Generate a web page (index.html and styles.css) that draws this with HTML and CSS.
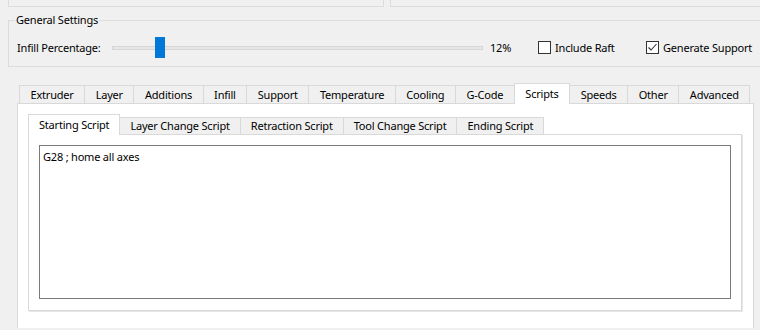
FILE: index.html
```html
<!DOCTYPE html>
<html lang="en">
<head>
  <meta charset="UTF-8" />
  <title>Slicer Settings</title>
  <link rel="stylesheet" href="styles.css">
</head>
<body>

  <div class="top-groups">
    <div class="top-box top-left"></div>
    <div class="top-box top-right"></div>
  </div>

  <fieldset class="group">
    <legend>General Settings</legend>
    <div class="settings-row">
      <span class="field-label">Infill Percentage:</span>
      <div class="slider">
        <div class="track"></div>
        <div class="thumb" style="left: 43px"></div>
      </div>
      <span class="value">12%</span>
      <label class="check-item raft">
        <span class="box"></span>Include Raft
      </label>
      <label class="check-item">
        <span class="box">
          <svg width="11" height="11" viewBox="0 0 11 11">
            <polyline points="1.5,5.5 4,8 9.5,2" fill="none" stroke="#333" stroke-width="1.1"/>
          </svg>
        </span>Generate Support
      </label>
    </div>
  </fieldset>

  <div class="tab-control outer">
    <div class="tab-strip">
      <div class="tab">Extruder</div>
      <div class="tab">Layer</div>
      <div class="tab">Additions</div>
      <div class="tab">Infill</div>
      <div class="tab">Support</div>
      <div class="tab">Temperature</div>
      <div class="tab">Cooling</div>
      <div class="tab">G-Code</div>
      <div class="tab active">Scripts</div>
      <div class="tab">Speeds</div>
      <div class="tab">Other</div>
      <div class="tab">Advanced</div>
    </div>
    <div class="tab-page">
      <div class="tab-control inner">
        <div class="tab-strip">
          <div class="tab active">Starting Script</div>
          <div class="tab">Layer Change Script</div>
          <div class="tab">Retraction Script</div>
          <div class="tab">Tool Change Script</div>
          <div class="tab">Ending Script</div>
        </div>
        <div class="tab-page">
          <textarea class="script" spellcheck="false">G28 ; home all axes</textarea>
        </div>
      </div>
    </div>
  </div>

</body>
</html>
```

FILE: styles.css
```css
body {
  margin: 0;
  background: #f0f0f0;
  font-family: "Noto Sans", "Open Sans", sans-serif;
  font-size: 11px;
  letter-spacing: -0.2px;
  color: #000;
}

/* remains of the group boxes above */
.top-groups {
  display: flex;
  height: 7px;
}

.top-box {
  box-sizing: border-box;
  height: 7px;
  border: 1px solid #dcdcdc;
  border-top: none;
}

.top-left {
  width: 376px;
  margin-left: 8px;
}

.top-right {
  flex: 1;
  margin-left: 6px;
  border-right: none;
}

/* General Settings */
.group {
  margin: 5px 0 0 8px;
  padding: 0 0 0 6px;
  border: 1px solid #dcdcdc;
  border-right: none;
  min-width: 0;
}

.group legend {
  padding: 0 1px;
  line-height: 16px;
}

.settings-row {
  display: flex;
  align-items: center;
  height: 21px;
  padding: 9px 0 8px;
  white-space: nowrap;
}

.field-label {
  width: 95px;
  padding-left: 2px;
}

.slider {
  position: relative;
  display: flex;
  align-items: center;
  width: 371px;
  height: 21px;
}

.track {
  box-sizing: border-box;
  width: 100%;
  height: 4px;
  border: 1px solid #d6d6d6;
  background: #e7e7e7;
}

.thumb {
  position: absolute;
  top: 0;
  width: 10px;
  height: 21px;
  background: #0078d7;
}

.value {
  width: 48px;
  margin-left: 7px;
}

.check-item {
  display: flex;
  align-items: center;
}

.raft {
  width: 108px;
}

.box {
  box-sizing: border-box;
  display: flex;
  align-items: center;
  justify-content: center;
  width: 13px;
  height: 13px;
  margin-right: 4px;
  border: 1px solid #333;
  background: #fff;
}

/* tab controls */
.outer {
  margin: 16px 6px 0 17px;
}

.tab-strip {
  display: flex;
  align-items: flex-end;
  height: 20px;
}

.outer > .tab-strip {
  padding-left: 2px;
}

.tab {
  box-sizing: border-box;
  height: 18px;
  padding: 0 10.5px;
  line-height: 17px;
  border: 1px solid #d9d9d9;
  border-bottom: none;
  background: #f0f0f0;
  white-space: nowrap;
}

.tab + .tab {
  margin-left: -1px;
}

.tab.active {
  position: relative;
  z-index: 1;
  height: 21px;
  margin-bottom: -1px;
  padding-top: 1px;
  background: #fff;
}

.tab-page {
  border: 1px solid #d9d9d9;
  background: #fff;
}

/* the outer page runs on below the window edge */
.outer > .tab-page {
  padding: 10px 11px 17px 10px;
  border-bottom: none;
}

.inner .tab {
  height: 17px;
  padding: 0 10px;
  line-height: 16px;
}

.inner .tab.active {
  height: 21px;
  padding-top: 2px;
}

.inner > .tab-page {
  padding: 10px 10px 11px 10px;
  box-shadow: 1px 1px 0 #e6e6e6;
}

.script {
  display: block;
  box-sizing: border-box;
  width: 100%;
  height: 154px;
  margin: 0;
  padding: 3px 3px;
  border: 1px solid #7a7a7a;
  font-family: inherit;
  font-size: 11px;
  letter-spacing: -0.2px;
  line-height: 16px;
  color: #000;
  resize: none;
  outline: none;
}
```
